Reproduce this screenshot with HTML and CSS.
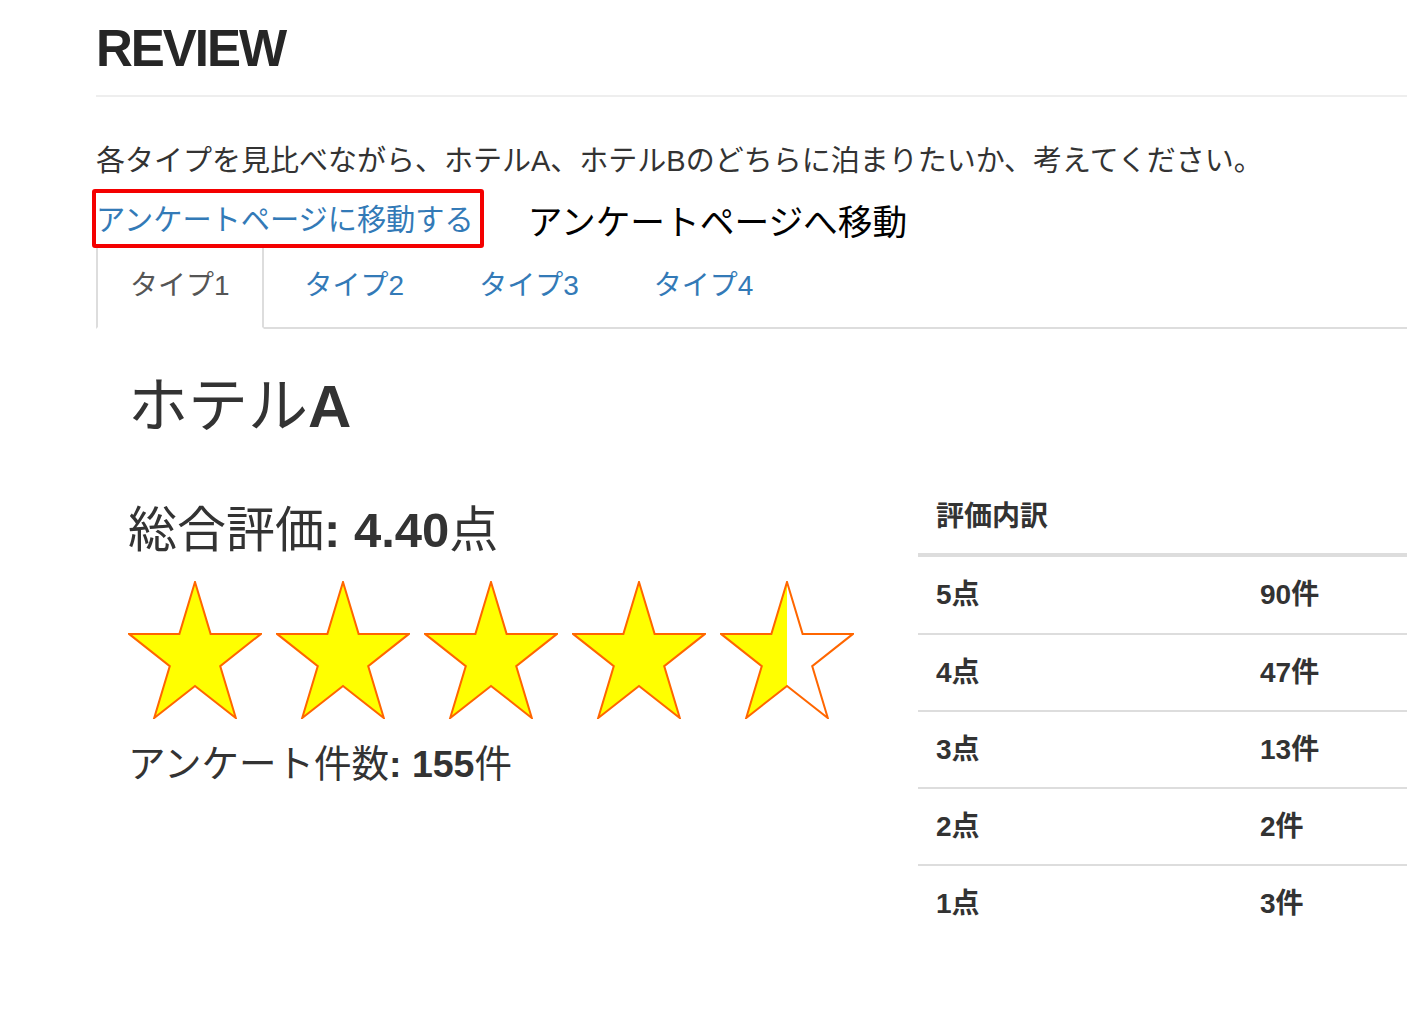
FILE: index.html
```html
<!DOCTYPE html>
<html lang="ja">
<head>
<meta charset="utf-8">
<title>REVIEW</title>
<link rel="stylesheet" href="styles.css">
</head>
<body>
<div class="page">
  <h1 class="page-title">REVIEW</h1>
  <p class="lead">各タイプを見比べながら、ホテルA、ホテルBのどちらに泊まりたいか、考えてください。</p>
  <div class="links">
    <a class="survey-link" href="#">アンケートページに移動する</a>
    <span class="note">アンケートページへ移動</span>
  </div>
  <ul class="tabs">
    <li class="tab active"><a href="#">タイプ1</a></li>
    <li class="tab"><a href="#">タイプ2</a></li>
    <li class="tab"><a href="#">タイプ3</a></li>
    <li class="tab"><a href="#">タイプ4</a></li>
  </ul>
  <div class="tab-content">
    <h2 class="hotel">ホテル<span class="latin">A</span></h2>
    <div class="row">
      <div class="summary">
        <h3 class="score">総合評価<span class="latin">: 4.40</span>点</h3>
        <div class="stars">
          <svg class="star" width="134" height="138" viewBox="-1 -1 134 138"><polygon points="66,0 81.6,51.9 132,51.9 91.2,84.1 106.8,136 66,103.9 25.2,136 40.8,84.1 0,51.9 50.4,51.9" fill="#ffff00" stroke="#ff6600" stroke-width="2"/></svg>
          <svg class="star" width="134" height="138" viewBox="-1 -1 134 138"><polygon points="66,0 81.6,51.9 132,51.9 91.2,84.1 106.8,136 66,103.9 25.2,136 40.8,84.1 0,51.9 50.4,51.9" fill="#ffff00" stroke="#ff6600" stroke-width="2"/></svg>
          <svg class="star" width="134" height="138" viewBox="-1 -1 134 138"><polygon points="66,0 81.6,51.9 132,51.9 91.2,84.1 106.8,136 66,103.9 25.2,136 40.8,84.1 0,51.9 50.4,51.9" fill="#ffff00" stroke="#ff6600" stroke-width="2"/></svg>
          <svg class="star" width="134" height="138" viewBox="-1 -1 134 138"><polygon points="66,0 81.6,51.9 132,51.9 91.2,84.1 106.8,136 66,103.9 25.2,136 40.8,84.1 0,51.9 50.4,51.9" fill="#ffff00" stroke="#ff6600" stroke-width="2"/></svg>
          <svg class="star" width="134" height="138" viewBox="-1 -1 134 138"><defs><linearGradient id="half" x1="0" y1="0" x2="1" y2="0"><stop offset="0.5" stop-color="#ffff00"/><stop offset="0.5" stop-color="#ffffff"/></linearGradient></defs><polygon points="66,0 81.6,51.9 132,51.9 91.2,84.1 106.8,136 66,103.9 25.2,136 40.8,84.1 0,51.9 50.4,51.9" fill="url(#half)" stroke="#ff6600" stroke-width="2"/></svg>
        </div>
        <p class="count">アンケート件数<span class="latin">: 155</span>件</p>
      </div>
      <div class="breakdown">
        <div class="bd-head">評価内訳</div>
        <div class="bd-row"><span class="bd-cell">5点</span><span class="bd-cell">90件</span></div>
        <div class="bd-row"><span class="bd-cell">4点</span><span class="bd-cell">47件</span></div>
        <div class="bd-row"><span class="bd-cell">3点</span><span class="bd-cell">13件</span></div>
        <div class="bd-row"><span class="bd-cell">2点</span><span class="bd-cell">2件</span></div>
        <div class="bd-row"><span class="bd-cell">1点</span><span class="bd-cell">3件</span></div>
      </div>
    </div>
  </div>
</div>
</body>
</html>
```

FILE: styles.css
```css
html, body {
  margin: 0;
  padding: 0;
  background: #fff;
}

body {
  font-family: "Liberation Sans", "Noto Sans CJK JP", sans-serif;
  color: #333;
  overflow: hidden;
}

.page {
  padding-left: 96px;
}

.page-title {
  margin: 0;
  padding: 20px 0 18px;
  font-size: 51px;
  line-height: 57px;
  font-weight: bold;
  letter-spacing: -2px;
  color: #262626;
  border-bottom: 2px solid #eee;
}

.lead {
  margin: 44px 0 0;
  font-size: 29px;
  line-height: 40px;
}

.links {
  margin-top: 8px;
  display: flex;
  align-items: center;
}

.survey-link {
  display: inline-block;
  margin-left: -4px;
  padding: 3px 6px 0 0;
  border: 4px solid #f40000;
  border-radius: 3px;
  font-size: 29.2px;
  line-height: 48px;
  color: #337ab7;
  text-decoration: none;
}

.note {
  margin-left: 44px;
  padding-top: 3px;
  font-size: 34.7px;
  color: #000;
}

.tabs {
  list-style: none;
  margin: 0;
  padding: 0;
  display: flex;
  border-bottom: 2px solid #ddd;
}

.tab {
  margin-right: 7px;
  margin-bottom: -2px;
}

.tab a {
  display: block;
  box-sizing: border-box;
  height: 81px;
  padding: 0 32px;
  border: 2px solid transparent;
  border-top: 0;
  font-size: 28px;
  line-height: 76px;
  color: #337ab7;
  text-decoration: none;
}

.tab.active a {
  color: #555;
  background: #fff;
  border-left-color: #ddd;
  border-right-color: #ddd;
}

.tab-content {
  padding-left: 32px;
}

.hotel {
  margin: 43px 0 0;
  font-size: 60px;
  line-height: 70px;
  font-weight: normal;
  color: #333;
}

.latin {
  font-weight: bold;
}

.row {
  margin-top: 38px;
  display: grid;
  grid-template-columns: 790px 489px;
}

.score {
  margin: 20px 0 0;
  font-size: 49px;
  line-height: 60px;
  font-weight: normal;
}

.stars {
  margin-top: 21px;
  display: flex;
  gap: 14px;
  height: 138px;
}

.star {
  display: block;
}

.count {
  margin: 21px 0 0;
  font-size: 37.5px;
  line-height: 48px;
}

.breakdown {
  font-weight: bold;
  font-size: 28px;
  color: #333;
}

.bd-head {
  height: 73px;
  line-height: 73px;
  padding-left: 18px;
  border-bottom: 4px solid #ddd;
}

.bd-row {
  display: grid;
  grid-template-columns: 324px 1fr;
  height: 75px;
  line-height: 75px;
  border-top: 2px solid #ddd;
}

.bd-head + .bd-row {
  border-top: 0;
  height: 76px;
  line-height: 76px;
}

.bd-cell {
  padding-left: 18px;
}
```
